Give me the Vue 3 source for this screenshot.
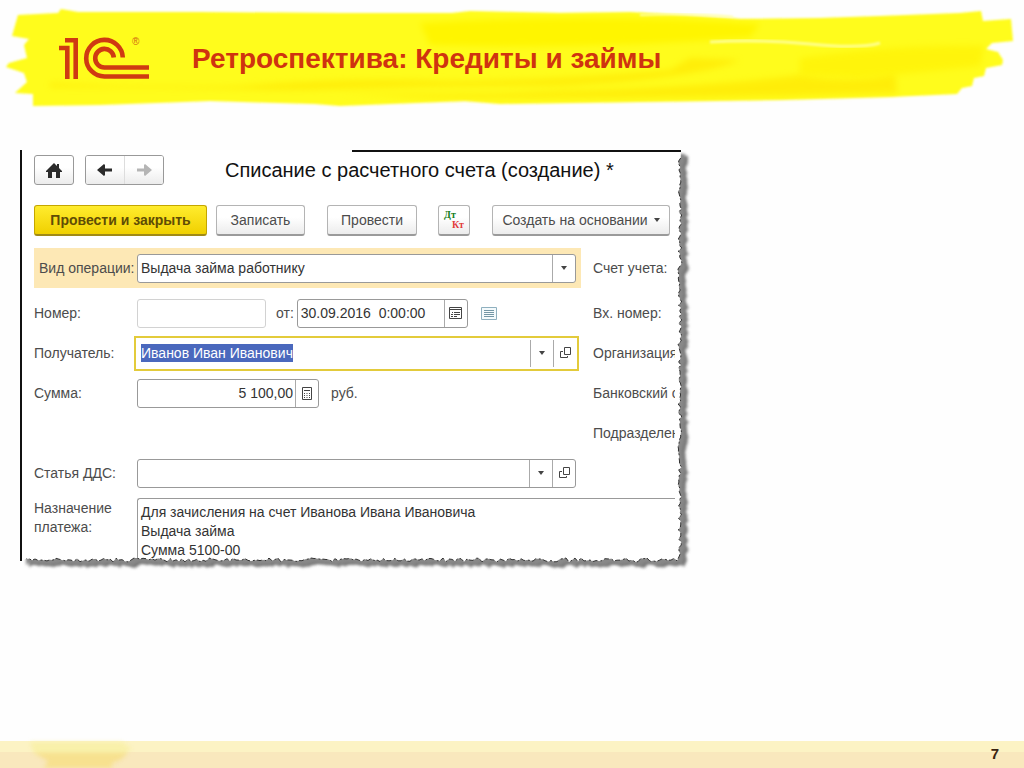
<script setup>
import { ref, onMounted, onBeforeUnmount } from 'vue'

const panel = ref(null)
const recipient = ref(null)
const size = ref({ w: 0, h: 0 })
const torn = ref({ shape: '', edge: '' })

const operation = ref('Выдача займа работнику')
const number = ref('')
const date = ref('30.09.2016  0:00:00')
const payee = ref('Иванов Иван Иванович')
const amount = ref('5 100,00')
const article = ref('')
const purpose = ref('Для зачисления на счет Иванова Ивана Ивановича\nВыдача займа\nСумма 5100-00')

// Deterministic noise so the paper edge is torn the same way each time
function noise(i) {
  const v = Math.sin(i * 12.9898) * 43758.5453
  return v - Math.floor(v)
}

function tear() {
  const w = panel.value.clientWidth
  const h = panel.value.clientHeight
  size.value = { w, h }
  const pts = []
  for (let y = 8; y < h - 2; y += 3) {
    pts.push(`${(w + 1 - noise(y) * 4).toFixed(1)} ${y}`)
  }
  for (let x = w - 4; x > 2; x -= 3) {
    pts.push(`${x} ${(h + 1 - noise(x + 7) * 4).toFixed(1)}`)
  }
  torn.value = {
    shape: `M0 0H${w}L${pts.join('L')}L0 ${h}Z`,
    edge: `M${pts.join('L')}`
  }
}

let observer
onMounted(() => {
  tear()
  observer = new ResizeObserver(tear)
  observer.observe(panel.value)
  recipient.value.focus()
  recipient.value.select()
})
onBeforeUnmount(() => observer.disconnect())
</script>

<template>
  <div class="slide">
    <header class="banner">
      <svg class="brush" viewBox="0 0 1024 120" preserveAspectRatio="none" aria-hidden="true">
        <defs>
          <filter id="soft" x="-5%" y="-20%" width="110%" height="140%"><feGaussianBlur stdDeviation="1" /></filter>
          <filter id="softer" x="-10%" y="-50%" width="120%" height="200%"><feGaussianBlur stdDeviation="3" /></filter>
        </defs>
        <path filter="url(#soft)" fill="#fffc1c" d="M18 15L58 13L61 9L78 12L200 12L340 13L452 13L470 11L560 13L630 12L684 15L740 19L820 18L880 16L960 13L981 11L983 21L1011 19L1013 41L992 43L986 49L998 52L1003 60L1002 65L986 68L984 76L974 78L972 86L962 88L957 94L890 97L780 100L640 102L500 104L465 101L340 106L315 104L210 101L100 105L33 106L33 94L15 93L27 82L24 73L6 67L9 63L27 58L24 45L29 39L12 36Z" />
        <path filter="url(#softer)" fill="#fff500" d="M420 23Q600 12 760 24L750 37Q600 50 430 45Z" />
        <path filter="url(#softer)" fill="#ffe600" opacity=".65" d="M50 87Q180 88 300 90Q430 86 560 86Q700 78 740 60L690 58L670 70Q560 80 450 81Q350 77 240 86Q150 88 50 83ZM340 93Q460 96 560 91Q700 88 800 75Q850 84 895 74L897 93L780 96Q600 99 430 98Z" />
        <path filter="url(#softer)" fill="#fff000" opacity=".6" d="M800 58Q900 44 984 46L980 66L860 78L800 75Z" />
        <path filter="url(#soft)" fill="none" stroke="#ffff8c" stroke-width="3" d="M710 42Q760 39 810 44T880 43" />
        <path filter="url(#soft)" fill="none" stroke="#ffffa8" stroke-width="2" d="M640 15Q690 13 733 17" />
      </svg>
      <svg class="logo" viewBox="58 34 94 48" role="img" aria-label="1С">
        <g fill="none" stroke="#cf3a12" stroke-width="4.600">
          <path d="M59 48H67.300V79M65 40.200H75.700V79" />
          <path d="M122.800 57.500A18.300 18.300 0 1 0 104.500 76.500H149M113.800 57.500A9.300 9.300 0 1 0 104.500 67.500H149" />
        </g>
        <text x="132" y="45" fill="#cf6a12" font-size="10">®</text>
      </svg>
      <h1>Ретроспектива: Кредиты и займы</h1>
    </header>

    <main ref="panel" class="panel">
      <svg class="paper" :viewBox="`0 0 ${size.w} ${size.h}`" :width="size.w" :height="size.h" aria-hidden="true">
        <filter id="shadow"><feGaussianBlur stdDeviation="1.500" /></filter>
        <path :d="torn.shape" transform="translate(7 6)" fill="#777" filter="url(#shadow)" />
        <path :d="torn.shape" transform="translate(4 4)" fill="#888" filter="url(#shadow)" />
        <path :d="torn.shape" fill="#fff" />
        <path :d="torn.edge" class="edge" />
      </svg>

      <div class="nav">
        <button class="btn icon home" aria-label="Начальная страница">
          <svg width="16" height="15" viewBox="0 0 16 15"><path fill="#2b2b2b" d="M8 0L11 3V1H13V5L16 8V9H14V15H10V9H6V15H2V9H0V8Z" /></svg>
        </button>
        <div class="pair">
          <button aria-label="Назад">
            <svg width="16" height="14" viewBox="0 0 16 14"><path fill="#2b2b2b" d="M0 7L7 1L8 2V5.500H15V8.500H8V12L7 13Z" /></svg>
          </button>
          <button aria-label="Вперед">
            <svg width="16" height="14" viewBox="0 0 16 14"><path fill="#b5b5b5" d="M16 7L9 1L8 2V5.500H1V8.500H8V12L9 13Z" /></svg>
          </button>
        </div>
        <h2>Списание с расчетного счета (создание) *</h2>
      </div>

      <div class="toolbar">
        <button class="btn primary">Провести и закрыть</button>
        <button class="btn save">Записать</button>
        <button class="btn post">Провести</button>
        <button class="btn dtkt"><span class="dt">Дт</span><span class="kt">Кт</span></button>
        <button class="btn create">Создать на основании <i class="tri"></i></button>
      </div>

      <form class="form" @submit.prevent>
        <div class="row accent">
          <label for="op">Вид операции:</label>
          <div class="field">
            <select id="op" v-model="operation"><option>Выдача займа работнику</option></select>
            <span class="cell"><i class="tri"></i></span>
          </div>
          <span class="side">Счет учета:</span>
        </div>

        <div class="row">
          <label for="num">Номер:</label>
          <div class="group">
            <div class="field pale"><input id="num" v-model="number"></div>
            <label for="date" class="from">от:</label>
            <div class="field date">
              <input id="date" v-model="date">
              <button class="cell" type="button" aria-label="Календарь">
                <svg width="13" height="12" viewBox="0 0 13 12"><path fill="none" stroke="#444" d="M.5.5H12.500V11.500H.5ZM1 2.500H12M3 5.500H4M5 5.500H11M2 7.500H4M5 7.500H11M2 9.500H4M5 9.500H8" /></svg>
              </button>
            </div>
            <button class="list" type="button" aria-label="Список">
              <svg width="16" height="13" viewBox="0 0 16 13"><path fill="#f4fafc" stroke="#8fb0bf" d="M.5.5H15.500V12.500H.5Z" /><path stroke="#7396a5" d="M3 3.500H13M3 5.500H13M3 7.500H13M3 9.500H13" /></svg>
            </button>
          </div>
          <span class="side">Вх. номер:</span>
        </div>

        <div class="row">
          <label for="payee">Получатель:</label>
          <div class="field focus">
            <input id="payee" ref="recipient" v-model="payee">
            <button class="cell" type="button" aria-label="Выбрать"><i class="tri"></i></button>
            <button class="cell" type="button" aria-label="Открыть получателя">
              <svg width="11" height="12" viewBox="0 0 11 12"><path fill="none" stroke="#444" d="M4.500.5H10.500V7.500H4.500ZM3 4.500H.5V10.500H7.500V9" /></svg>
            </button>
          </div>
          <span class="side">Организация</span>
        </div>

        <div class="row">
          <label for="sum">Сумма:</label>
          <div class="group">
            <div class="field sum">
              <input id="sum" v-model="amount">
              <button class="cell" type="button" aria-label="Калькулятор">
                <svg width="10" height="13" viewBox="0 0 10 13"><path fill="none" stroke="#444" d="M.5.5H9.500V12.500H.5ZM2 3.500H8M2 6.500H3M4.500 6.500H5.500M7 6.500H8M2 8.500H3M4.500 8.500H5.500M7 8.500H8M2 10.500H3M4.500 10.500H5.500M7 10.500H8" /></svg>
              </button>
            </div>
            <span class="unit">руб.</span>
          </div>
          <span class="side">Банковский счет:</span>
        </div>

        <div class="row"><span class="side last">Подразделение:</span></div>

        <div class="row">
          <label for="dds">Статья ДДС:</label>
          <div class="field">
            <input id="dds" v-model="article">
            <button class="cell" type="button" aria-label="Выбрать"><i class="tri"></i></button>
            <button class="cell" type="button" aria-label="Открыть статью">
              <svg width="11" height="12" viewBox="0 0 11 12"><path fill="none" stroke="#444" d="M4.500.5H10.500V7.500H4.500ZM3 4.500H.5V10.500H7.500V9" /></svg>
            </button>
          </div>
        </div>

        <div class="memo">
          <label for="memo">Назначение платежа:</label>
          <textarea id="memo" v-model="purpose" rows="3"></textarea>
        </div>
      </form>
    </main>

    <footer class="footer">
      <svg class="stain" width="140" height="27" viewBox="0 0 140 27" aria-hidden="true">
        <path fill="#f8efa0" opacity=".7" d="M6 1H98L108 8L100 13H10Z" />
        <path fill="#f6df83" opacity=".8" d="M10 12H104L96 19L88 22V27H20L24 20Z" />
      </svg>
      <span>7</span>
    </footer>
  </div>
</template>

<style>
body { margin: 0; background: #fefefe; }
</style>

<style scoped>
.slide {
  min-height: 100vh;
  display: flex;
  flex-direction: column;
  font-family: "Liberation Sans", Arial, sans-serif;
  font-size: 14px;
  color: #4c4c4c;
  box-sizing: border-box;
}
.slide *, .slide *::before { box-sizing: border-box; }
button, input, select, textarea { font: inherit; color: inherit; margin: 0; }
button { cursor: pointer; }

.banner {
  position: relative;
  height: 120px;
  display: flex;
  align-items: center;
  gap: 40px;
  padding: 0 58px 4px;
}
.brush { position: absolute; inset: 0; width: 100%; height: 100%; }
.logo { position: relative; width: 94px; height: 48px; flex: none; }
h1 { position: relative; margin: 0; padding-top: 2px; font-size: 28px; line-height: 32px; color: #cf3310; white-space: nowrap; }

.panel {
  position: relative;
  isolation: isolate;
  max-width: 661px;
  width: 100%;
  margin: 30px 0 0 20px;
  padding: 5px 6px 3px 12px;
  border-left: 2px solid #111;
}
.panel::before {
  content: "";
  position: absolute;
  top: 0;
  right: 0;
  width: 50%;
  height: 2px;
  background: #111;
}
.paper { position: absolute; inset: 0; z-index: -1; overflow: visible; }
.edge { fill: none; stroke: #333; stroke-width: 1; stroke-dasharray: 5 2 2 3; }

.nav { display: flex; align-items: center; height: 30px; }
.btn {
  display: flex;
  align-items: center;
  justify-content: center;
  height: 31px;
  padding: 0;
  border: 1px solid #b4b4b4;
  border-bottom: 2px solid #9a9a9a;
  border-radius: 3px;
  background: linear-gradient(#fff 40%, #ececec);
  white-space: nowrap;
}
.home { width: 40px; height: 30px; border: 1px solid #999; }
.pair { display: flex; width: 79px; height: 30px; margin-left: 11px; border: 1px solid #999; border-radius: 3px; overflow: hidden; }
.pair button {
  flex: 1;
  display: flex;
  align-items: center;
  justify-content: center;
  border: 0;
  padding: 0;
  background: linear-gradient(#fff 40%, #ececec);
}
.pair button + button { border-left: 1px solid #ddd; }
h2 { margin: 0 0 0 61px; font-size: 20px; line-height: 24px; font-weight: 400; color: #111; white-space: nowrap; }

.toolbar { display: flex; margin-top: 20px; padding-right: 5px; }
.primary {
  width: 173px;
  font-weight: 700;
  color: #5f4c05;
  border-color: #c4a600 #c4a600 #a08a16;
  background: linear-gradient(#ffec2e, #f0d000);
}
.save { width: 89px; margin-left: 9px; }
.post { width: 90px; margin-left: 22px; }
.dtkt { width: 32px; margin-left: 21px; flex-direction: column; font: 700 10px/10px "Liberation Serif", serif; }
.dt { color: #16801b; margin-right: 8px; }
.kt { color: #e23b3b; margin-left: 8px; }
.create { flex: 1; margin-left: 22px; gap: 6px; }
.tri { display: block; border: 3px solid transparent; border-top: 4px solid #444; border-bottom: 0; }

.form { margin-top: 12px; }
.row {
  position: relative;
  display: grid;
  grid-template-columns: 103px minmax(0, 1fr) 82px;
  align-items: center;
  height: 40px;
  overflow: hidden;
}
.row > .field, .group { margin-right: 17px; }
.accent { margin-bottom: 5px; }
.accent::before {
  content: "";
  position: absolute;
  inset: 0 94px 0 0;
  background: #fde8b5;
}
.accent > * { position: relative; }
.accent label { padding-left: 5px; }
label, .side, .unit { white-space: nowrap; }
.side { overflow: hidden; }
.last { grid-column: 3; }
.group { display: flex; align-items: center; }
.field {
  display: flex;
  align-items: center;
  height: 29px;
  border: 1px solid #999;
  border-radius: 3px;
  background: #fff;
  color: #333;
}
.field input, .field select {
  flex: 1;
  min-width: 0;
  width: 100%;
  height: 18px;
  line-height: 18px;
  padding: 0 3px;
  border: 0;
  outline: 0;
  background: transparent;
  appearance: none;
  white-space: pre;
}
.cell {
  flex: none;
  width: 23px;
  height: 27px;
  display: flex;
  align-items: center;
  justify-content: center;
  padding: 0;
  border: 0;
  border-left: 1px solid #aaa;
  background: transparent;
}
.pale { width: 129px; border-color: #d2d2d2; }
.from { margin: 0 3px 0 10px; }
.date { width: 171px; }
.list { display: flex; margin-left: 13px; padding: 0; border: 0; background: transparent; }
.row > .focus { height: 35px; margin-left: -3px; margin-right: 14px; padding: 0 1px 0 2px; border: 2px solid #e3cb3b; border-radius: 0; }
.focus input::selection { background: #4a68bd; color: #fff; }
.sum { width: 182px; }
.sum input { text-align: right; padding-right: 2px; }
.unit { margin-left: 12px; }

.memo { display: grid; grid-template-columns: 103px minmax(0, 1fr); margin-top: 5px; }
.memo label { white-space: normal; line-height: 19px; padding-top: 1px; }
.memo textarea {
  display: block;
  height: 60px;
  padding: 4px 3px 0;
  border: 1px solid #999;
  border-width: 1px 0 0 1px;
  border-radius: 3px 0 0;
  outline: 0;
  resize: none;
  overflow: hidden;
  line-height: 19px;
  background: transparent;
  color: #333;
}

.footer {
  position: relative;
  margin-top: auto;
  height: 27px;
  display: flex;
  align-items: center;
  justify-content: flex-end;
  padding: 0 25px 2px;
  background: linear-gradient(#fcf3c4 11px, #f9e8bd 11px);
  font-size: 15px;
  font-weight: 700;
  color: #3a2410;
}
.stain { position: absolute; left: 24px; top: 0; filter: blur(2px); }
</style>
